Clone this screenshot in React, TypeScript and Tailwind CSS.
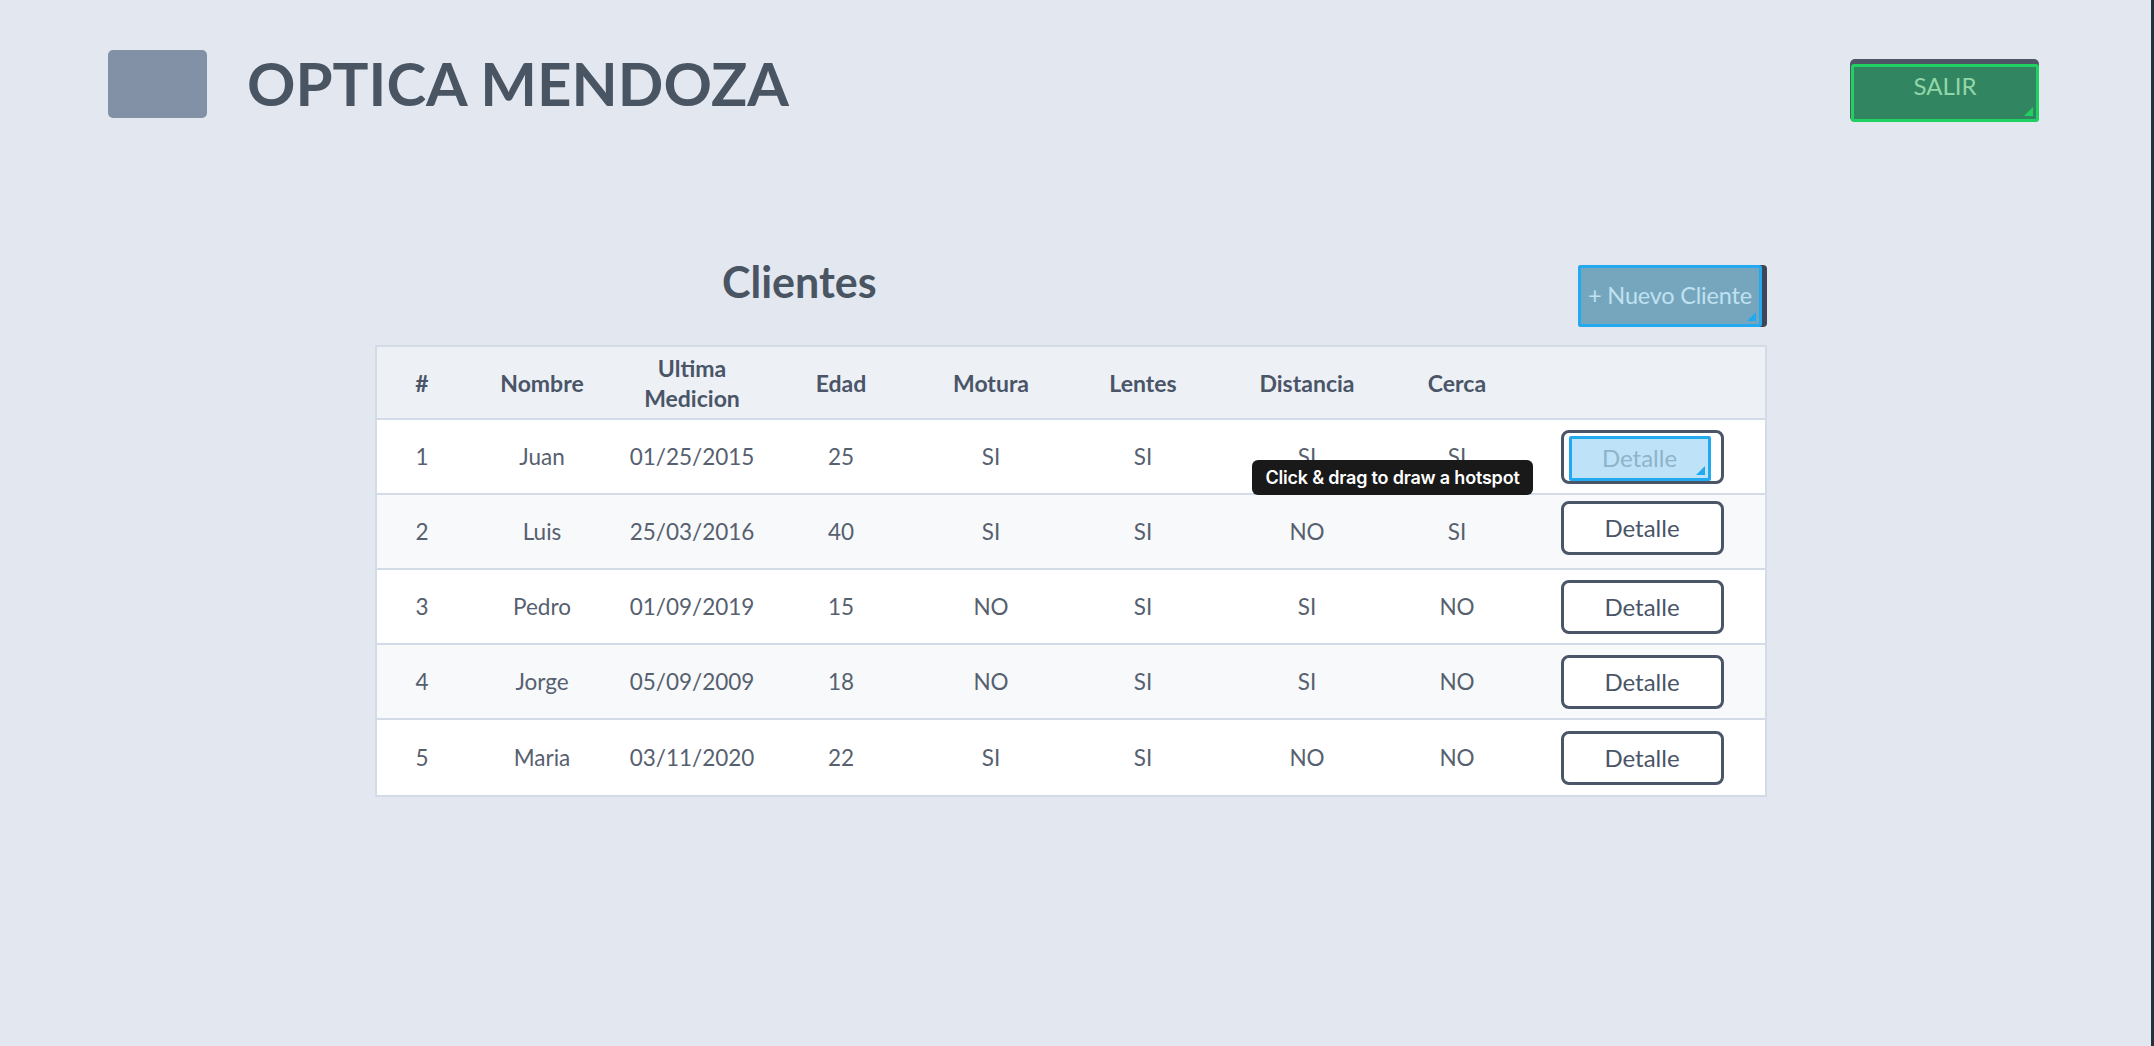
import React from 'react';

const clientes = [
    {id: 1, nombre: "Juan", fecha: "01/25/2015", edad: 25, motura: "SI", lentes: "SI", distancia: "SI", cerca: "SI"},
    {id: 2, nombre: "Luis", fecha: "25/03/2016", edad: 40, motura: "SI", lentes: "SI", distancia: "NO", cerca: "SI"},
    {id: 3, nombre: "Pedro", fecha: "01/09/2019", edad: 15, motura: "NO", lentes: "SI", distancia: "SI", cerca: "NO"},
    {id: 4, nombre: "Jorge", fecha: "05/09/2009", edad: 18, motura: "NO", lentes: "SI", distancia: "SI", cerca: "NO"},
    {id: 5, nombre: "Maria", fecha: "03/11/2020", edad: 22, motura: "SI", lentes: "SI", distancia: "NO", cerca: "NO"},
];

const cols = "grid grid-cols-[90px_150px_150px_148px_152px_152px_176px_124px_1fr]";

// little corner marker the prototyping tool draws on hotspots
function Corner({color}: { color: string }) {
    return (
        <svg className="absolute right-[3px] bottom-[3px]" width="9" height="9" viewBox="0 0 9 9">
            <polygon points="9,0 9,9 0,9" fill={color}/>
        </svg>
    );
}

function App() {
    return (
        <div className="min-h-screen flex bg-[#e3e8f0] font-[Lato,sans-serif] text-[#4a5568]">
            <div className="flex-1">
                {/* Header */}
                <header className="flex items-start pl-[108px] pr-[112px] pt-[50px]">
                    <div className="w-[99px] h-[68px] rounded-[5px] bg-[#8391a6]"/>
                    <h1 className="ml-[40px] mt-[3px] text-[60px] leading-none font-bold text-[#4a5563]">OPTICA MENDOZA</h1>
                    <div className="ml-auto mt-[9px] w-[189px] h-[63px] rounded-[5px] bg-[#4d5567] pl-[1px] pt-[5px]">
                        <button className="relative w-full h-full rounded-[3px] border-[3px] border-[#1fd160] bg-[#318560] text-[24px] leading-[36px] text-[#92d6a9] flex justify-center pt-[1px]">
                            SALIR
                            <Corner color="#1fd160"/>
                        </button>
                    </div>
                </header>

                {/* Clientes */}
                <section className="w-[1392px] ml-[375px] mt-[137px]">
                    <div className="flex items-start">
                        <h2 className="ml-[347px] mt-[1px] text-[43px] leading-none font-bold text-[#4a5563]">Clientes</h2>
                        <div className="ml-auto mt-[6px] w-[189px] h-[62px] rounded-[4px] bg-[#3e4657]">
                            <button className="relative w-[184px] h-full rounded-[3px] border-[3px] border-[#22a9ef] bg-[#76a6be] text-[23.5px] tracking-[-0.2px] text-[#c0e1f0] flex items-center justify-center whitespace-nowrap">
                                + Nuevo Cliente
                                <Corner color="#22a9ef"/>
                            </button>
                        </div>
                    </div>

                    <div className="relative mt-[18px] border-2 border-[#d3dbe6] bg-white">
                        <div className={`${cols} h-[73px] items-center bg-[#edf1f6] border-b-2 border-[#d3dbe6] text-[23px] leading-[30px] font-bold text-center`}>
                            <div>#</div>
                            <div>Nombre</div>
                            <div>Ultima<br/>Medicion</div>
                            <div>Edad</div>
                            <div>Motura</div>
                            <div>Lentes</div>
                            <div>Distancia</div>
                            <div>Cerca</div>
                            <div/>
                        </div>
                        {clientes.map((c, index) => (
                            <div key={c.id}
                                 className={`${cols} h-[75px] items-center text-center text-[22.5px] text-[#56606f] ${index % 2 === 1 ? "bg-[#f7f9fb]" : "bg-white"} ${index < clientes.length - 1 ? "border-b-2 border-[#d3dbe6]" : ""}`}>
                                <div>{c.id}</div>
                                <div>{c.nombre}</div>
                                <div>{c.fecha}</div>
                                <div>{c.edad}</div>
                                <div>{c.motura}</div>
                                <div>{c.lentes}</div>
                                <div>{c.distancia}</div>
                                <div>{c.cerca}</div>
                                <div className="flex justify-center">
                                    <button className={`relative w-[163px] h-[54px] rounded-[8px] border-[3px] border-[#4a5568] bg-white text-[24px] text-[#4a5568] ${index === 1 ? "-mt-[8px]" : ""}`}>
                                        Detalle
                                        {index === 0 && (
                                            <span className="absolute left-[5px] right-[10px] top-[3px] bottom-0 rounded-[2px] border-[3px] border-[#22a9ef] bg-[#bee3f8] text-[#8fb3c8] flex items-center justify-center">
                                                Detalle
                                                <Corner color="#22a9ef"/>
                                            </span>
                                        )}
                                    </button>
                                </div>
                            </div>
                        ))}

                        {/* tooltip from the hotspot tool */}
                        <div className="absolute left-[875px] top-[113px] w-[281px] h-[35px] rounded-[6px] bg-[#191919] text-white font-[Inter,sans-serif] font-semibold text-[18px] tracking-[-0.2px] flex items-center justify-center whitespace-nowrap">
                            Click &amp; drag to draw a hotspot
                        </div>
                    </div>
                </section>
            </div>
            <div className="w-[3px] bg-[#252f3e]"/>
        </div>
    );
}

export default App;
